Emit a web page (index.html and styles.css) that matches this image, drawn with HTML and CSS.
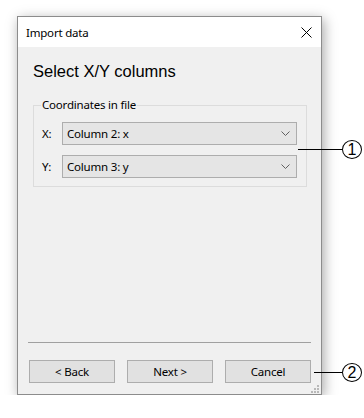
FILE: index.html
```html
<!DOCTYPE html>
<html lang="en">
<head>
    <meta charset="UTF-8">
    <title>Import data</title>
    <link rel="stylesheet" href="styles.css">
</head>
<body>
    <div class="dialog">
        <div class="titlebar">
            <span class="title">Import data</span>
            <svg class="close" width="11" height="11" viewBox="0 0 11 11">
                <path d="M0.5 0.5 L10.5 10.5 M10.5 0.5 L0.5 10.5" stroke="#000" stroke-width="1" fill="none"/>
            </svg>
        </div>
        <div class="content">
            <h1>Select X/Y columns</h1>
            <fieldset class="group">
                <legend>Coordinates in file</legend>
                <div class="row">
                    <span class="label">X:</span>
                    <div class="combo">
                        <span>Column 2: x</span>
                        <svg width="9" height="5" viewBox="0 0 9 5"><path d="M0.5 0.5 L4.5 4.5 L8.5 0.5" stroke="#606060" fill="none"/></svg>
                    </div>
                </div>
                <div class="row">
                    <span class="label">Y:</span>
                    <div class="combo">
                        <span>Column 3: y</span>
                        <svg width="9" height="5" viewBox="0 0 9 5"><path d="M0.5 0.5 L4.5 4.5 L8.5 0.5" stroke="#606060" fill="none"/></svg>
                    </div>
                </div>
            </fieldset>
            <div class="spacer"></div>
            <div class="separator"></div>
            <div class="buttons">
                <button>&lt; Back</button>
                <button>Next &gt;</button>
                <button>Cancel</button>
            </div>
            <svg class="grip" width="8" height="8" viewBox="0 0 8 8" fill="#b8b8b8">
                <rect x="6" y="0" width="2" height="2"/>
                <rect x="3" y="3" width="2" height="2"/>
                <rect x="6" y="3" width="2" height="2"/>
                <rect x="0" y="6" width="2" height="2"/>
                <rect x="3" y="6" width="2" height="2"/>
                <rect x="6" y="6" width="2" height="2"/>
            </svg>
        </div>
    </div>

    <!-- callouts -->
    <div class="callout callout-1">
        <div class="line"></div>
        <div class="num">1</div>
    </div>
    <div class="callout callout-2">
        <div class="line"></div>
        <div class="num">2</div>
    </div>
</body>
</html>
```

FILE: styles.css
```css
body {
    margin: 0;
    padding: 16px 0 0 17px;
    background: #fff;
    font-family: "Segoe UI", "Noto Sans", sans-serif;
    font-size: 11.5px;
    letter-spacing: -0.2px;
    color: #000;
}

.dialog {
    width: 303px;
    height: 377px;
    border: 1px solid #8c8c8c;
    background: #f0f0f0;
    box-shadow: 2px 3px 12px rgba(0, 0, 0, 0.35);
    display: flex;
    flex-direction: column;
}

.titlebar {
    height: 30px;
    background: #fff;
    display: flex;
    align-items: center;
    justify-content: space-between;
    padding: 0 9px 0 8px;
}

.title {
    line-height: 16px;
    margin-top: 1px;
}

.close {
    margin-top: 1px;
}

.content {
    flex: 1;
    display: flex;
    flex-direction: column;
    padding: 0 10px 11px 11px;
    position: relative;
}

h1 {
    font-family: "Liberation Sans", Arial, sans-serif;
    font-size: 16.5px;
    font-weight: normal;
    letter-spacing: 0;
    line-height: 20px;
    margin: 14px 0 16px 4px;
}

.group {
    margin: 0 4px 0 4px;
    padding: 0 9px 8px 7px;
    border: 1px solid #dcdcdc;
}

.group legend {
    padding: 0 1px;
    line-height: 16px;
}

.row {
    display: flex;
    align-items: center;
    margin-top: 9px;
}

.row + .row {
    margin-top: 10px;
}

.label {
    width: 20px;
    margin-left: 1px;
}

.combo {
    flex: 1;
    height: 21px;
    border: 1px solid #adadad;
    background: #e5e5e5;
    display: flex;
    align-items: center;
    justify-content: space-between;
    padding: 0 6px 0 4px;
}

.spacer {
    flex: 1;
}

.separator {
    height: 1px;
    background: #a0a0a0;
    margin: 0 0 17px -1px;
}

.buttons {
    display: flex;
    gap: 12px;
}

.buttons button {
    width: 86px;
    height: 23px;
    border: 1px solid #adadad;
    background: #e1e1e1;
    font-family: inherit;
    font-size: inherit;
    letter-spacing: inherit;
    color: #000;
    padding: 0;
}

.grip {
    position: absolute;
    right: 2px;
    bottom: 1px;
}

.callout {
    position: absolute;
    display: flex;
    align-items: center;
}

.callout .line {
    height: 1px;
    background: #000;
}

.callout .num {
    width: 18px;
    height: 17px;
    border: 1.5px solid #000;
    border-radius: 50%;
    font-family: "Liberation Sans", Arial, sans-serif;
    font-size: 16px;
    letter-spacing: 0;
    line-height: 17px;
    text-align: center;
}

.callout-1 {
    left: 298px;
    top: 140px;
}

.callout-1 .line {
    width: 44px;
}

.callout-2 {
    left: 314px;
    top: 363px;
}

.callout-2 .line {
    width: 28px;
}
```
